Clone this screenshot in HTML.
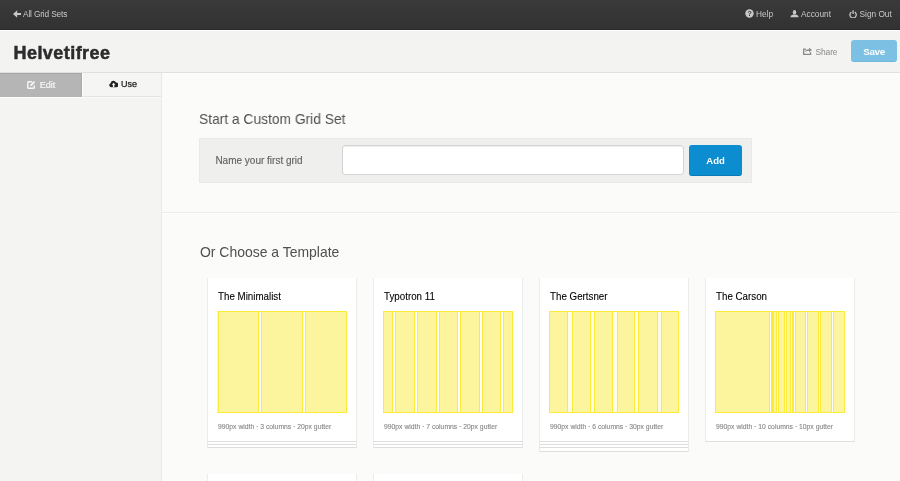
<!DOCTYPE html>
<html><head><meta charset="utf-8">
<style>
*{box-sizing:border-box;margin:0;padding:0}
html,body{width:900px;height:481px;overflow:hidden}
body{position:relative;background:#fbfbfa;font-family:"Liberation Sans",sans-serif;color:#333}
.abs{position:absolute}
#topbar{left:0;top:0;width:900px;height:30px;background:linear-gradient(#3a3a3a,#323232);border-bottom:1px solid #2b2b2b}
#topbar .t{position:absolute;top:9px;font-size:8.3px;color:#c8c8c8;white-space:nowrap;line-height:10px}
#hdr{left:0;top:30px;width:900px;height:43px;background:#f3f3f2;border-top:1px solid #fcfcfc;border-bottom:1px solid #e0e0de}
#logo{left:13.5px;top:41px;font-size:18px;font-weight:bold;color:#2c2c2c;line-height:24px;letter-spacing:0.45px;-webkit-text-stroke:0.5px #2c2c2c}
#share{left:815.5px;top:46.5px;font-size:8.5px;color:#8a8a8a;line-height:10px;letter-spacing:-0.15px;white-space:nowrap}
#save{left:851px;top:40px;width:46px;height:22px;border-radius:3px;background:#7cc0e3;border-bottom:1px solid #72b6dc;color:#fff;font-weight:bold;font-size:9.8px;letter-spacing:-0.3px;text-align:center;line-height:22.5px;padding-top:0.5px}
#side{left:0;top:73px;width:162px;height:408px;background:#f4f4f3;border-right:1px solid #eaeae9}
#tabedit{left:0;top:73px;width:82px;height:24px;background:#b5b5b5;border-top:1px solid #a6a6a6;border-right:1px solid #aaa;color:#f6f6f6;font-size:9px;line-height:23px}
#tabuse{left:82px;top:73px;width:80px;height:24px;background:#f5f5f4;border-left:1px solid #fff;border-bottom:1px solid #e4e4e3;border-right:1px solid #e8e8e7;color:#222;font-size:9px;line-height:23px;-webkit-text-stroke:0.25px #222}
.h2{font-size:15px;color:#505050;white-space:nowrap;line-height:18px;transform-origin:0 0}
#box{left:199px;top:138px;width:553px;height:45px;background:#efefee;border:1px solid #e9e9e7}
#lbl{left:215.4px;top:155.3px;font-size:10px;color:#636363;-webkit-text-stroke:0.15px #636363;line-height:12px;white-space:nowrap}
#inp{left:342px;top:145px;width:342px;height:30px;background:#fff;border:1px solid #d4d4d4;border-radius:3px;box-shadow:inset 0 1px 1px rgba(0,0,0,0.07)}
#add{left:689px;top:145px;width:53px;height:31px;background:#0b8dd0;border-radius:3px;border-bottom:1px solid #0878b6;color:#fff;font-weight:bold;font-size:9.5px;text-align:center;line-height:32.5px}
#div{left:162px;top:212px;width:738px;height:2px;background:#ededeb;border-bottom:1px solid #fff}
.card{position:absolute;width:150px;height:164px;background:#fff;border-left:1px solid #ececeb;border-right:1px solid #ebebea;border-bottom:1px solid #dfdfdf}
.sheet{position:absolute;width:150px;height:4px;background:#fff;border-left:1px solid #ececeb;border-right:1px solid #ebebea;border-bottom:1px solid #dddddd}
.ct{position:absolute;left:9.6px;top:12.2px;font-size:10.5px;color:#000;-webkit-text-stroke:0.1px #000;transform:scaleX(0.93);transform-origin:0 0;line-height:12px;white-space:nowrap}
.cap{position:absolute;left:9.6px;top:143.6px;font-size:7px;transform:scaleX(0.97);transform-origin:0 0;color:#858585;-webkit-text-stroke:0.1px #858585;line-height:9px;white-space:nowrap}
.grid{position:absolute;left:9px;top:33px;width:130px;height:102px;border:1px solid #fdeb3a;background:#fff}
.col{position:absolute;top:0;bottom:0;background:#fdf59e;border-left:1px solid #fdeb3a;border-right:1px solid #fdeb3a}
</style></head><body>
<div id="root" style="position:absolute;left:0;top:0;width:900px;height:481px;will-change:transform">
<div id="topbar" class="abs">
  <div class="t" style="left:13px">
    <svg width="8" height="8" viewBox="0 0 8 8" style="position:absolute;left:0;top:1px"><path d="M0 4 L4.2 0.3 L4.2 3 L8 3 L8 5 L4.2 5 L4.2 7.7 Z" fill="#c8c8c8"/></svg>
    <span style="position:absolute;left:10px;letter-spacing:-0.15px">All Grid Sets</span>
  </div>
  <div class="t" style="left:744px">
    <svg width="9" height="9" viewBox="0 0 9 9" style="position:absolute;left:0.5px;top:0.3px"><circle cx="4.5" cy="4.5" r="4.2" fill="#c8c8c8"/><text x="4.6" y="7.2" font-size="7" font-weight="bold" text-anchor="middle" fill="#363636" font-family="Liberation Sans">?</text></svg>
    <span style="position:absolute;left:12px">Help</span>
  </div>
  <div class="t" style="left:790px">
    <svg width="9" height="8" viewBox="0 0 9 8" style="position:absolute;left:0;top:0.8px"><ellipse cx="4.5" cy="2.3" rx="1.7" ry="2.3" fill="#c8c8c8"/><path d="M0.3 7.2 Q0.6 5.3 3 4.6 H6 Q8.4 5.3 8.7 7.2 Z" fill="#c8c8c8"/></svg>
    <span style="position:absolute;left:11px">Account</span>
  </div>
  <div class="t" style="left:849px">
    <svg width="8.2" height="8.2" viewBox="0 0 9 9" style="position:absolute;left:0.2px;top:0.9px"><path d="M2.6 2.3 A3.5 3.5 0 1 0 6.4 2.3" fill="none" stroke="#c8c8c8" stroke-width="1.4"/><path d="M4.5 0.2 V4.4" stroke="#c8c8c8" stroke-width="1.4"/></svg>
    <span style="position:absolute;left:10.5px">Sign Out</span>
  </div>
</div>
<div id="hdr" class="abs"></div>
<div id="logo" class="abs">Helvetifree</div>
<div id="share" class="abs">
  <svg width="9" height="7" viewBox="0 0 9 7" style="position:absolute;left:-13px;top:1.5px"><path d="M0.65 1.2 V6.35 H7.6 V4.3" fill="none" stroke="#8a8a8a" stroke-width="1.3"/><path d="M0 1.2 H3" stroke="#8a8a8a" stroke-width="1.3"/><path d="M1.6 5.2 C2 3.4 3.6 2.7 6 2.7 V4.2 L9 2 L6 -0.2 V1.3 C3.5 1.3 1.8 2.8 1.6 5.2 Z" fill="#8a8a8a"/></svg>
  Share
</div>
<div id="save" class="abs">Save</div>

<div class="abs" style="left:162px;top:73px;width:738px;height:1px;background:#fff"></div>
<div id="side" class="abs"></div>
<div class="abs" style="left:0;top:97px;width:161px;height:1px;background:#fcfcfb"></div>
<div id="tabedit" class="abs">
  <svg width="9" height="8" viewBox="0 0 9 8" style="position:absolute;left:27px;top:6.9px"><path d="M5.2 0.75 H1.6 Q0.75 0.75 0.75 1.6 V6.4 Q0.75 7.25 1.6 7.25 H6.4 Q7.25 7.25 7.25 6.4 V4.2" fill="none" stroke="#f6f6f6" stroke-width="1.4"/><path d="M3.2 5 L3.2 3.7 L6.9 0 L8.2 1.3 L4.5 5 Z" fill="#f6f6f6"/></svg>
  <span style="position:absolute;left:39.7px;top:0;-webkit-text-stroke:0.2px #f6f6f6">Edit</span>
</div>
<div id="tabuse" class="abs">
  <svg width="9.2" height="7.4" viewBox="0 0 10 8" style="position:absolute;left:25.7px;top:7.3px"><path d="M2.2 7.8 A2.2 2.2 0 0 1 1.8 3.5 A3 3 0 0 1 7.6 2.8 A2.5 2.5 0 0 1 8 7.8 Z" fill="#222"/><path d="M5 3 L7 5.2 H5.8 V7.8 H4.2 V5.2 H3 Z" fill="#f9f9f8"/></svg>
  <span style="position:absolute;left:38px;top:0">Use</span>
</div>

<div class="abs h2" style="left:199px;top:110px;transform:scaleX(0.92)">Start a Custom Grid Set</div>
<div id="box" class="abs"></div>
<div id="lbl" class="abs">Name your first grid</div>
<div id="inp" class="abs"></div>
<div id="add" class="abs">Add</div>
<div id="div" class="abs"></div>
<div class="abs h2" style="left:199.5px;top:242.5px;transform:scaleX(0.93)">Or Choose a Template</div>

<!-- cards -->
<div class="sheet" style="left:207px;top:444px"></div>
<div class="sheet" style="left:207px;top:441px"></div>
<div class="card" style="left:207px;top:278px">
  <div class="ct">The Minimalist</div>
  <div class="grid" style="border-left-color:#fef4a8">
    <div class="col" style="left:0px;width:41px"></div>
    <div class="col" style="left:43px;width:42px"></div>
    <div class="col" style="left:87px;width:42px"></div>
  </div>
  <div class="cap">990px width · 3 columns · 20px gutter</div>
</div>

<div class="sheet" style="left:373px;top:444px"></div>
<div class="sheet" style="left:373px;top:441px"></div>
<div class="card" style="left:373px;top:278px">
  <div class="ct">Typotron 11</div>
  <div class="grid">
    <div class="col" style="left:-1px;width:10px"></div>
    <div class="col" style="left:11px;width:20px"></div>
    <div class="col" style="left:33px;width:20px"></div>
    <div class="col" style="left:55px;width:19px"></div>
    <div class="col" style="left:76px;width:20px"></div>
    <div class="col" style="left:98px;width:19px"></div>
    <div class="col" style="left:119px;width:10px"></div>
  </div>
  <div class="cap">990px width · 7 columns · 20px gutter</div>
</div>

<div class="sheet" style="left:539px;top:448px"></div>
<div class="sheet" style="left:539px;top:444px"></div>
<div class="sheet" style="left:539px;top:441px"></div>
<div class="card" style="left:539px;top:278px">
  <div class="ct">The Gertsner</div>
  <div class="grid" style="background:#fffbe6">
    <div class="col" style="left:-1px;width:19px"></div>
    <div class="col" style="left:22px;width:19px"></div>
    <div class="col" style="left:44px;width:19px"></div>
    <div class="col" style="left:67px;width:18px"></div>
    <div class="col" style="left:88px;width:20px"></div>
    <div class="col" style="left:111px;width:18px"></div>
  </div>
  <div class="cap">990px width · 6 columns · 30px gutter</div>
</div>

<div class="card" style="left:705px;top:278px">
  <div class="ct">The Carson</div>
  <div class="grid">
    <div class="col" style="left:-1px;width:55px"></div>
    <div class="col" style="left:55px;width:2px"></div>
    <div class="col" style="left:57px;width:4px"></div>
    <div class="col" style="left:62px;width:7px"></div>
    <div class="col" style="left:70px;width:5px"></div>
    <div class="col" style="left:76px;width:2px"></div>
    <div class="col" style="left:79px;width:11px"></div>
    <div class="col" style="left:91px;width:12px"></div>
    <div class="col" style="left:104px;width:12px"></div>
    <div class="col" style="left:117px;width:12px"></div>
  </div>
  <div class="cap">990px width · 10 columns · 10px gutter</div>
</div>

<div class="card" style="left:207px;top:474px"></div>
<div class="card" style="left:373px;top:474px"></div>
</div>
</body></html>
